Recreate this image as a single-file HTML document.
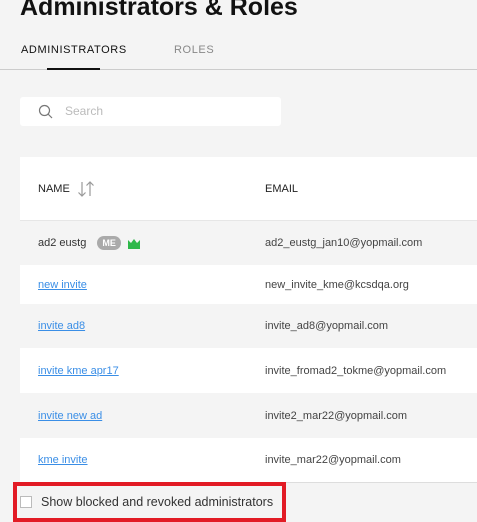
<!DOCTYPE html>
<html><head><style>
*{margin:0;padding:0;box-sizing:border-box}
body{width:477px;height:519px;background:#f4f4f4;font-family:"Liberation Sans",sans-serif;position:relative;overflow:hidden;color:#333}
.abs{position:absolute}
h1{position:absolute;left:20px;top:-7px;font-size:25px;font-weight:bold;color:#111;letter-spacing:0px}
.tab{position:absolute;top:44px;font-size:11px;letter-spacing:0.6px}
.row{position:absolute;left:20px;right:0;font-size:11px}
.row span{position:absolute;top:50%;transform:translateY(-50%)}
.n{left:18px}.e{left:245px;color:#444}
a{color:#3a8ee6;text-decoration:underline}
</style></head><body>
<h1>Administrators &amp; Roles</h1>
<div class="tab" style="left:21px;color:#111">ADMINISTRATORS</div>
<div class="tab" style="left:174px;color:#888">ROLES</div>
<div class="abs" style="left:0;right:0;top:69px;height:1px;background:#ccc"></div>
<div class="abs" style="left:47px;top:68px;width:53px;height:2px;background:#111"></div>
<div class="abs" style="left:20px;top:97px;width:261px;height:29px;background:#fff;border-radius:3px"></div>
<svg class="abs" style="left:38px;top:104px" width="16" height="16" viewBox="0 0 16 16"><circle cx="6.5" cy="6.5" r="5" fill="none" stroke="#777" stroke-width="1.2"/><path d="M10 10L14 14" stroke="#777" stroke-width="1.2"/></svg>
<div class="abs" style="left:65px;top:104px;font-size:12px;color:#bbb">Search</div>
<div class="row" style="top:157px;height:63px;background:#fff"><span class="n" style="color:#222">NAME</span>
<svg style="position:absolute;left:57px;top:23px" width="18" height="18" viewBox="0 0 18 18"><path d="M5 2V16M1.5 12.5L5 16L8.5 12.5M13 16V2M9.5 5.5L13 2L16.5 5.5" fill="none" stroke="#999" stroke-width="1.2"/></svg>
<span class="e" style="color:#222">EMAIL</span></div>
<div class="row" style="top:220px;height:45px;border-top:1px solid #e6e6e6"><span class="n">ad2 eustg <b style="display:inline-block;background:#aaa;color:#fff;border-radius:7px;font-size:9px;padding:2px 5px;margin-left:8px;vertical-align:middle">ME</b>
<svg style="vertical-align:middle;margin-left:3px" width="14" height="12" viewBox="0 0 14 12"><path d="M1 3L4 6L7 2L10 6L13 3V12H1Z" fill="#2eb84a"/></svg></span><span class="e">ad2_eustg_jan10@yopmail.com</span></div>
<div class="row" style="top:265px;height:39px;background:#fff"><span class="n"><a>new invite</a></span><span class="e">new_invite_kme@kcsdqa.org</span></div>
<div class="row" style="top:304px;height:44px"><span class="n"><a>invite ad8</a></span><span class="e">invite_ad8@yopmail.com</span></div>
<div class="row" style="top:348px;height:45px;background:#fff"><span class="n"><a>invite kme apr17</a></span><span class="e">invite_fromad2_tokme@yopmail.com</span></div>
<div class="row" style="top:393px;height:45px"><span class="n"><a>invite new ad</a></span><span class="e">invite2_mar22@yopmail.com</span></div>
<div class="row" style="top:438px;height:45px;background:#fff;border-bottom:1px solid #ddd"><span class="n"><a>kme invite</a></span><span class="e">invite_mar22@yopmail.com</span></div>
<div class="abs" style="left:13px;top:482px;width:273px;height:40px;border:4px solid #e21b25"></div>
<div class="abs" style="left:20px;top:496px;width:12px;height:12px;border:1px solid #bbb;background:#fff"></div>
<div class="abs" style="left:41px;top:495px;font-size:12.5px;color:#333">Show blocked and revoked administrators</div>
</body></html>
